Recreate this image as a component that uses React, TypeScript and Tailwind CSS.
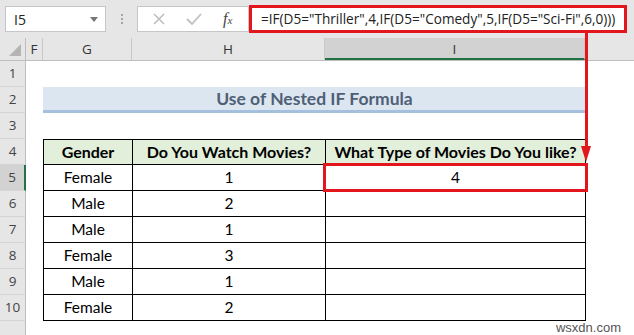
const rows = [
  { g: 'Female', h: '1', i: '4' },
  { g: 'Male', h: '2', i: '' },
  { g: 'Male', h: '1', i: '' },
  { g: 'Female', h: '3', i: '' },
  { g: 'Male', h: '1', i: '' },
  { g: 'Female', h: '2', i: '' },
]

function RowHead({ n, active }: { n?: number; active?: boolean }) {
  return (
    <div
      className={
        'w-[26px] shrink-0 flex items-center justify-center border-b border-[#d4d4d4] text-[13.5px] text-[#444] ' +
        (active ? 'bg-[#d2d2d2] border-r-2 border-r-[#217346]' : 'bg-[#e6e6e6] border-r border-r-[#bdbdbd]')
      }
    >
      {n}
    </div>
  )
}

export default function App() {
  return (
    <div className="relative w-[634px] h-[335px] overflow-hidden bg-white font-['Open_Sans',sans-serif]">
      {/* formula bar */}
      <div className="h-[38px] bg-[#e6e6e6] flex items-start pt-[5px]">
        <div className="ml-[5px] mt-[1px] w-[101px] h-[26px] bg-white border border-[#c6c6c6] flex items-center justify-between pl-[8px] pr-[7px] text-[14px] text-[#222]">
          <span>I5</span>
          <span className="w-0 h-0 border-l-[4px] border-r-[4px] border-t-[5px] border-l-transparent border-r-transparent border-t-[#777]" />
        </div>
        <div className="w-[31px] h-[27px] flex flex-col items-center justify-center gap-[2px]">
          <span className="w-[2px] h-[2px] bg-[#a6a6a6]" />
          <span className="w-[2px] h-[2px] bg-[#a6a6a6]" />
          <span className="w-[2px] h-[2px] bg-[#a6a6a6]" />
        </div>
        <div className="mt-[1px] w-[112px] h-[26px] bg-white border border-[#c6c6c6] flex items-center pl-[12px]">
          <svg width="14" height="14" viewBox="0 0 14 14" className="ml-[2px]">
            <path d="M2 2 L12 12 M12 2 L2 12" stroke="#bfbfbf" strokeWidth="1.6" fill="none" />
          </svg>
          <svg width="16" height="14" viewBox="0 0 16 14" className="ml-[20px]">
            <path d="M1 7 L6 12 L15 2" stroke="#bfbfbf" strokeWidth="1.8" fill="none" />
          </svg>
          <span className="ml-[21px] font-['Liberation_Serif',serif] italic text-[16px] text-[#444] leading-none">
            f<span className="text-[11px]">x</span>
          </span>
        </div>
        <div className="w-[378px] h-[28px] bg-white border-[3px] border-[#e2161c] flex items-center pl-[9px] text-[13.6px] text-[#222] whitespace-nowrap overflow-hidden">
          =IF(D5="Thriller",4,IF(D5="Comedy",5,IF(D5="Sci-Fi",6,0)))
        </div>
      </div>

      {/* column headers */}
      <div className="h-[23px] flex bg-[#e6e6e6] border-b border-[#bdbdbd] text-[13.5px] text-[#333]">
        <div className="w-[26px] shrink-0 border-r border-[#bdbdbd] flex items-end justify-end pr-[4px] pb-[4px]">
          <svg width="12" height="12" viewBox="0 0 12 12">
            <path d="M12 0 L12 12 L0 12 Z" fill="#b4b4b4" />
          </svg>
        </div>
        <div className="w-[17px] border-r border-[#c8c8c8] flex items-center justify-center">F</div>
        <div className="w-[89px] border-r border-[#c8c8c8] flex items-center justify-center">G</div>
        <div className="w-[193px] border-r border-[#c8c8c8] flex items-center justify-center">H</div>
        <div className="w-[260px] bg-[#d2d2d2] border-b-2 border-[#217346] border-r border-r-[#c8c8c8] flex items-center justify-center pt-[2px]">I</div>
        <div className="flex-1" />
      </div>

      {/* row 1 */}
      <div className="h-[26px] flex">
        <RowHead n={1} />
      </div>
      {/* row 2 title */}
      <div className="h-[26px] flex">
        <RowHead n={2} />
        <div className="w-[17px]" />
        <div className="w-[543px] bg-[#dce6f1] border-b-[3px] border-[#a7bfdf] flex items-center justify-center font-['Lato',sans-serif] font-bold text-[17.5px] text-[#4f5f75] pt-[1px]">
          Use of Nested IF Formula
        </div>
      </div>
      {/* row 3 */}
      <div className="h-[26px] flex">
        <RowHead n={3} />
      </div>
      {/* row 4 header */}
      <div className="h-[26px] flex">
        <RowHead n={4} />
        <div className="w-[17px]" />
        <div className="flex bg-[#e2efda] border border-black font-['Lato',sans-serif] font-bold text-[16px] text-black">
          <div className="w-[89px] border-r border-black flex items-center justify-center">Gender</div>
          <div className="w-[193px] border-r border-black flex items-center justify-center">Do You Watch Movies?</div>
          <div className="w-[259px] flex items-center justify-center">What Type of Movies Do You like?</div>
        </div>
      </div>
      {rows.map((r, idx) => (
        <div key={idx} className="h-[26px] flex">
          <RowHead n={idx + 5} active={idx === 0} />
          <div className="w-[17px]" />
          <div className="flex border-x border-b border-black font-['Lato',sans-serif] text-[15.5px] text-black">
            <div className="w-[89px] border-r border-black flex items-center justify-center">{r.g}</div>
            <div className="w-[193px] border-r border-black flex items-center justify-center">{r.h}</div>
            <div className="w-[259px] flex items-center justify-center">{r.i}</div>
          </div>
        </div>
      ))}
      <div className="h-[20px] flex">
        <RowHead />
      </div>

      {/* annotations */}
      <div className="absolute left-[585px] top-[32px] w-[3px] h-[116px] bg-[#e2161c]" />
      <div className="absolute left-[581px] top-[146px] w-0 h-0 border-l-[5.5px] border-r-[5.5px] border-t-[16px] border-l-transparent border-r-transparent border-t-[#e2161c]" />
      <div className="absolute left-[323px] top-[163px] w-[265px] h-[29px] border-[3px] border-[#e2161c]" />

      <div className="absolute right-[12px] bottom-[1px] text-[13px] text-[#555] font-['Liberation_Sans',sans-serif] bg-white/70 px-[1px] leading-none">
        wsxdn.com
      </div>
    </div>
  )
}
